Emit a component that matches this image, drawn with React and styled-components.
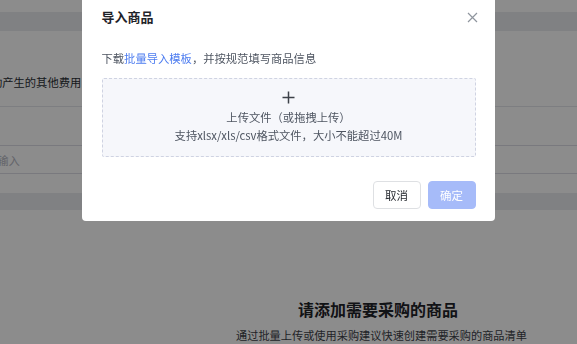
import React from 'react'
import styled, { createGlobalStyle } from 'styled-components'

const GlobalStyle = createGlobalStyle`
  html, body {
    margin: 0;
    padding: 0;
    background: #fff;
    overflow: hidden;
  }
  body {
    font-family: "Noto Sans CJK SC", "Noto Sans", sans-serif;
    -webkit-font-smoothing: antialiased;
  }
`

const Page = styled.div`
  width: 840px;
  margin-left: -46px;
  height: 344px;
  display: flex;
  flex-direction: column;
`

const Spacer = styled.div`
  height: ${(p) => p.h}px;
  flex-shrink: 0;
`

const SectionBar = styled.div`
  height: ${(p) => p.h}px;
  background: #e9ebee;
  flex-shrink: 0;
`

const FeeBlock = styled.div`
  height: 76px;
  padding-left: ${(p) => p.indent}px;
  border-bottom: 1px solid #e4e6eb;
  display: flex;
  align-items: center;
  padding-top: 26px;
  box-sizing: border-box;
  font-size: 11.3px;
  color: #2b2f36;
`

const InputRow = styled.div`
  height: 29px;
  box-sizing: border-box;
  border-top: 1px solid #dcdde6;
  border-bottom: 1px solid #dcdde6;
  padding-left: ${(p) => p.indent}px;
  display: flex;
  align-items: center;
  font-size: 11.3px;
  color: #b4b7bf;
`

const Empty = styled.div`
  display: flex;
  flex-direction: column;
  align-items: center;
  padding-top: 88px;
  padding-left: 8px;
`

const EmptyTitle = styled.div`
  font-size: 16px;
  font-weight: 700;
  line-height: 22px;
  color: #1f2329;
`

const EmptyText = styled.div`
  margin-top: 6px;
  margin-left: 7px;
  font-size: 11.2px;
  line-height: 18px;
  color: #3d4148;
`

const Mask = styled.div`
  position: fixed;
  inset: 0;
  background: rgba(0, 0, 0, 0.45);
  display: flex;
  justify-content: center;
  align-items: flex-start;
`

const Modal = styled.div`
  width: 413px;
  margin-top: -4px;
  margin-left: -1px;
  background: #fff;
  border-radius: 4px;
  display: flex;
  flex-direction: column;
`

const Header = styled.div`
  display: flex;
  align-items: center;
  justify-content: space-between;
  padding: 10px 15px 0 20px;
`

const Title = styled.div`
  font-size: 13px;
  font-weight: 600;
  line-height: 22px;
  color: #1f2329;
`

const Close = styled.button`
  border: 0;
  background: none;
  padding: 0;
  width: 14px;
  height: 14px;
  display: flex;
  align-items: center;
  justify-content: center;
  cursor: pointer;
`

const Body = styled.div`
  padding: 20px 19px 0 20px;
`

const Hint = styled.div`
  font-size: 11.3px;
  line-height: 20px;
  color: #4e5561;
`

const Link = styled.a`
  color: #4c7cf0;
  text-decoration: none;
`

const Drop = styled.div`
  margin-top: 10px;
  height: 79px;
  box-sizing: border-box;
  border: 1px dashed #cfd3e2;
  border-radius: 2px;
  background: #f6f7fb;
  display: flex;
  flex-direction: column;
  align-items: center;
  justify-content: center;
  font-size: 11.3px;
  line-height: 18px;
  color: #4e5561;
`

const PlusIcon = styled.svg`
  margin-bottom: 4px;
`

const Footer = styled.div`
  display: flex;
  justify-content: flex-end;
  gap: 7px;
  padding: 24px 19px 12px 20px;
`

const Button = styled.button`
  width: 48px;
  height: 28px;
  box-sizing: border-box;
  border-radius: 4px;
  font-family: inherit;
  font-size: 11.5px;
  padding: 0;
  border: 1px solid ${(p) => (p.primary ? '#a6bbf9' : '#dee0e3')};
  background: ${(p) => (p.primary ? '#a6bbf9' : '#fff')};
  color: ${(p) => (p.primary ? '#fff' : '#1f2329')};
`

export default function App() {
  return (
    <>
      <GlobalStyle />
      <Page>
        <Spacer h={12} />
        <SectionBar h={19} />
        <FeeBlock indent={3}>采购活动产生的其他费用</FeeBlock>
        <Spacer h={38} />
        <InputRow indent={32}>请输入</InputRow>
        <Spacer h={19} />
        <SectionBar h={17} />
        <Empty>
          <EmptyTitle>请添加需要采购的商品</EmptyTitle>
          <EmptyText>通过批量上传或使用采购建议快速创建需要采购的商品清单</EmptyText>
        </Empty>
      </Page>
      <Mask>
        <Modal>
          <Header>
            <Title>导入商品</Title>
            <Close aria-label="关闭">
              <svg width="11" height="11" viewBox="0 0 11 11">
                <path d="M1 1L10 10M10 1L1 10" stroke="#8f959e" strokeWidth="1.2" fill="none" />
              </svg>
            </Close>
          </Header>
          <Body>
            <Hint>
              下载<Link>批量导入模板</Link>，并按规范填写商品信息
            </Hint>
            <Drop>
              <PlusIcon width="13" height="13" viewBox="0 0 13 13">
                <path d="M6.5 0.5V12.5M0.5 6.5H12.5" stroke="#3d4148" strokeWidth="1.5" fill="none" />
              </PlusIcon>
              <div>上传文件（或拖拽上传）</div>
              <div>支持xlsx/xls/csv格式文件，大小不能超过40M</div>
            </Drop>
          </Body>
          <Footer>
            <Button>取消</Button>
            <Button primary>确定</Button>
          </Footer>
        </Modal>
      </Mask>
    </>
  )
}
